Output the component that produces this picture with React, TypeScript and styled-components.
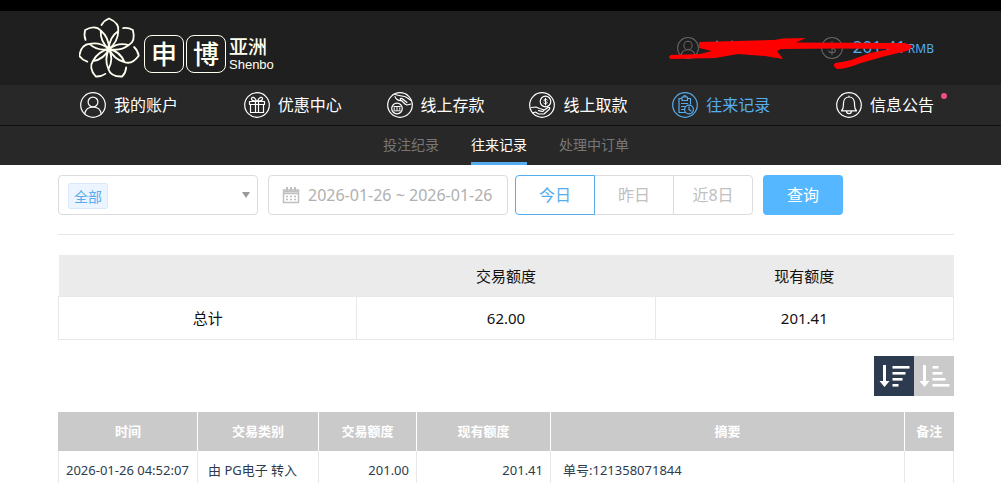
import React from "react";
import styled, { createGlobalStyle } from "styled-components";

const GlobalStyle = createGlobalStyle`
  *, *::before, *::after { box-sizing: border-box; }
  body {
    margin: 0;
    background: #fff;
    color: #111;
    font: 14px/20px "Noto Sans", "Noto Sans CJK SC", sans-serif;
  }
  button, input, select { font: inherit; margin: 0; }
  a { color: inherit; text-decoration: none; }
`;

const blue = "#55acee";

const TopBar = styled.header`
  position: relative;
  display: flex;
  align-items: center;
  justify-content: space-between;
  height: 85px;
  padding: 0 67px 0 79px;
  border-top: 11px solid #000;
  background: #1f1f1f;
`;

const Logo = styled.a`
  display: flex;
  align-items: center;
  color: #fffff0;

  > svg { margin-right: 4px; }
`;

const LogoTile = styled.span`
  display: flex;
  align-items: center;
  justify-content: center;
  width: 40px;
  height: 38px;
  margin: 12px 2px 0 0;
  border: 1px solid #fffff0;
  border-radius: 8px;
  font-size: 26px;
  font-weight: 500;
`;

const LogoName = styled.span`
  display: flex;
  flex-direction: column;
  margin: 12px 0 0 1px;
  font: 13px/16px "Liberation Sans", sans-serif;

  strong {
    font: 500 19px/22px "Noto Sans CJK SC", sans-serif;
  }
`;

const LatinName = styled.span`
  display: block;
`;

const Account = styled.div`
  display: flex;
  align-items: center;
  gap: 10px;
  color: ${blue};
`;

const AccountUser = styled.a`
  display: flex;
  width: 134px;
`;

const Balance = styled.span`
  display: flex;
  align-items: baseline;
  gap: 2px;
  font-size: 17px;

  small { font-size: 12px; }
`;

const Scribble = styled.svg`
  position: absolute;
  top: 19px;
  right: 88px;
  pointer-events: none;
`;

const Nav = styled.nav`
  display: flex;
  justify-content: space-between;
  height: 41px;
  padding: 0 67px 0 80px;
  border-bottom: 1px solid #111;
  background: #282828;
`;

const NavLink = styled.a<{ $active?: boolean }>`
  position: relative;
  display: flex;
  align-items: center;
  gap: 8px;
  color: ${(p) => (p.$active ? blue : "#fff")};
  font-size: 16px;

  &:first-child { margin-right: 21px; }
  &:last-child { margin-left: 21px; }
`;

const Dot = styled.i`
  position: absolute;
  top: 8px;
  right: -13px;
  width: 6px;
  height: 6px;
  border-radius: 50%;
  background: #f0507c;
`;

const SubNav = styled.nav`
  display: flex;
  justify-content: center;
  gap: 32px;
  height: 39px;
  padding: 0 47px 0 58px;
  background: #282828;
`;

const SubLink = styled.a<{ $active?: boolean }>`
  border-bottom: 3px solid ${(p) => (p.$active ? blue : "transparent")};
  color: ${(p) => (p.$active ? "#fff" : "#777")};
  line-height: 38px;
`;

const Main = styled.main`
  padding: 10px 47px 0 58px;
`;

const Filters = styled.form`
  display: flex;
  padding-bottom: 19px;
  border-bottom: 1px solid #e6e6e6;
`;

const TypeField = styled.div`
  position: relative;
  width: 200px;
  height: 40px;
  margin-right: 10px;
  border: 1px solid #dcdcdc;
  border-radius: 4px;

  &::before {
    content: "";
    position: absolute;
    top: 7px;
    left: 9px;
    width: 40px;
    height: 26px;
    border: 1px solid #d9e9fb;
    border-radius: 2px;
    background: #ecf5ff;
  }

  &::after {
    content: "";
    position: absolute;
    top: 16px;
    right: 7px;
    border: 4px solid transparent;
    border-top: 6px solid #999;
    border-bottom: 0;
  }
`;

const TypeSelect = styled.select`
  position: relative;
  z-index: 1;
  width: 100%;
  height: 100%;
  padding: 3px 15px 0;
  border: 0;
  background: transparent;
  color: ${blue};
  appearance: none;
`;

const DateField = styled.label`
  display: flex;
  align-items: center;
  gap: 8px;
  width: 240px;
  height: 40px;
  margin-right: 7px;
  padding: 0 4px 0 13px;
  border: 1px solid #dcdcdc;
  border-radius: 4px;
  color: #c0c0c0;

  svg { flex: none; }
`;

const DateInput = styled.input`
  flex: 1;
  min-width: 0;
  padding: 0;
  border: 0;
  outline: 0;
  background: transparent;
  color: #b0b0b0;
  font-size: 16px;
`;

const DayGroup = styled.div`
  display: flex;
  margin-right: 10px;
`;

const DayButton = styled.button<{ $active?: boolean }>`
  position: relative;
  z-index: ${(p) => (p.$active ? 1 : 0)};
  width: 80px;
  height: 40px;
  padding: 0;
  border: 1px solid ${(p) => (p.$active ? blue : "#dcdcdc")};
  background: #fff;
  color: ${(p) => (p.$active ? blue : "#c0c0c0")};
  font-size: 16px;

  & + & { margin-left: -1px; }
  &:first-child { border-radius: 4px 0 0 4px; }
  &:last-child { border-radius: 0 4px 4px 0; }
`;

const SearchButton = styled.button`
  width: 80px;
  height: 40px;
  padding: 0;
  border: 0;
  border-radius: 4px;
  background: #55b7ff;
  color: #fff;
  font-size: 16px;
`;

const SummaryTable = styled.table`
  width: 100%;
  margin-top: 20px;
  border-collapse: collapse;
  table-layout: fixed;
  font-size: 15px;
  text-align: center;

  th, td { padding: 0; }
  thead th { height: 41px; padding-top: 2px; background: #ebebeb; font-weight: 400; }
  tbody th, td { height: 43px; border: 1px solid #e8e8e8; font-weight: 400; }
`;

const SortBar = styled.div`
  display: flex;
  justify-content: flex-end;
  margin: 16px 0;
`;

const SortButton = styled.button<{ $active?: boolean }>`
  width: 40px;
  height: 40px;
  padding: 0;
  border: 0;
  background: ${(p) => (p.$active ? "#2c3b50" : "#cacaca")};
  color: #fff;

  svg { display: block; }
`;

const RecordTable = styled.table`
  width: 100%;
  border-collapse: collapse;
  table-layout: fixed;
  color: #2c3b50;

  th {
    height: 39px;
    padding: 0;
    border-left: 1px solid #fff;
    background: #cacaca;
    color: #fff;
    font-size: 13px;
  }
  th:first-child { border-left-color: #cacaca; }
  td {
    height: 40px;
    padding: 0 7px;
    border: 1px solid #e8e8e8;
    border-top: 0;
    font-size: 13px;
    white-space: nowrap;
  }
`;

const Cell = styled.td<{ $kind?: "type" | "amount" | "note" }>`
  && {
    text-align: ${(p) => (p.$kind === "amount" ? "right" : "left")};
    padding-left: ${(p) => (p.$kind === "note" ? "12px" : p.$kind === "type" ? "10px" : "7px")};
  }
`;

const Flower = () => (
  <svg width="61" height="64" viewBox="-30 -33 61 64" fill="none" stroke="#fffff0" strokeWidth="1.8" strokeLinecap="round" strokeLinejoin="round">
    {[0, 1, 2, 3, 4, 5, 6].map((i) => (
      <path
        key={i}
        transform={`rotate(${(i * 360) / 7})`}
        d="M-7.5 -24 Q-5 -28.5 0 -30.5 Q10.5 -26 9.3 -18 Q9 -7 0 0 M9.3 -18 Q0 -11.5 0 0"
      />
    ))}
  </svg>
);

const Round = ({ children, size = 26, color = "currentColor" }: { children: React.ReactNode; size?: number; color?: string }) => (
  <svg width={size} height={size} viewBox="0 0 26 26" fill="none" stroke={color} strokeWidth="1.2" strokeLinecap="round" strokeLinejoin="round">
    <circle cx="13" cy="13" r="12.3" />
    {children}
  </svg>
);

const UserShape = () => (
  <>
    <circle cx="13" cy="10" r="4.9" />
    <path d="M4.8 21.8 C5.5 17.5 8.5 15 13 15 S20.5 17.5 21.2 21.8" />
  </>
);

const DollarShape = () => (
  <path d="M13 5 V21 M17 9.5 C16 7 9.5 6.8 9.5 10 C9.5 13.5 17 12.3 17 16 C17 19.5 9.8 19.3 9 16.4" />
);

const GiftShape = () => (
  <path d="M5.5 9.5 H20.5 V12.5 H5.5 Z M6.5 12.5 V20.5 H19.5 V12.5 M11.5 9.5 V20.5 M14.5 9.5 V20.5 M12.5 9 C11 5 7.5 4 7.5 7 C7.5 8.5 10 9 12.5 9 M13.5 9 C15 5 18.5 4 18.5 7 C18.5 8.5 16 9 13.5 9" />
);

const DepositShape = () => (
  <>
    <circle cx="10" cy="16.5" r="5.3" />
    <path d="M6.8 14.5 H13.2 M6.8 18.8 H13.2 M7.2 17.5 V15.8 M10 17.5 V15.5 M12.8 17.5 V15.8" strokeWidth="1" />
    <path d="M8 2.5 C11 3.5 14 4 17.5 4.5 C20 5 21.5 7 24 8.5 M8 4.5 C8.5 7 11.5 9 14.5 8.5 L18 12 M14.5 8.5 C12.5 7.5 13 6 15 6.5 L20 10.5 M18 12 L20 13 L24 12" />
  </>
);

const WithdrawShape = () => (
  <>
    <circle cx="16.5" cy="9.5" r="5.3" />
    <path d="M18.3 8 C17.5 6.8 14.9 7 15 8.3 C15.1 9.8 18.2 9.2 18.2 10.8 C18.2 12.2 15.3 12.2 14.6 11 M16.5 6.2 V13" strokeWidth="1" />
    <path d="M2.5 15.5 L7 15 L10.5 16.5 L14 17.5 C15.5 18.2 14.5 19.5 13 19.3 L9.5 18.7 M14.5 18.5 L19 15.5 C20.8 14.8 21.3 16.2 20 17.5 L15 22 H9.5 L6.5 20 L3.5 21" />
  </>
);

const RecordShape = () => (
  <>
    <path d="M10 6.5 H7 V20.5 H13 M15.5 6.5 H18.5 V12 M10 5 H15.5 V8.5 H10 Z M11.5 5 C11.5 3 14 3 14 5 M9.5 11.5 H15.5 M9.5 14.5 H12.5 M9.5 17.5 H12" />
    <circle cx="17" cy="17.5" r="4.4" />
    <path d="M17 14.8 V17.5 L19 19" />
  </>
);

const BellShape = () => (
  <path d="M13 4 V5 M5.5 18.8 C8 16.5 7.3 14 7.5 11 C7.8 7 10 5 13 5 S18.2 7 18.5 11 C18.7 14 18 16.5 20.5 18.8 Z M10.5 19 C10.5 22.5 15.5 22.5 15.5 19" />
);

const Calendar = () => (
  <svg width="18" height="18" viewBox="0 0 18 18" fill="none" stroke="currentColor" aria-hidden="true">
    <path d="M1.5 4 H16.5 V16.5 H1.5 Z M1.5 7.5 H16.5" strokeWidth="1.5" />
    <path d="M2 5.5 H16" strokeWidth="2" />
    <path d="M5 1 V5 M9 1 V5 M13 1 V5" strokeWidth="2" />
    <path d="M4 10.5 H14 M4 13.5 H14" strokeWidth="1.5" strokeDasharray="2 2" />
  </svg>
);

const SortIcon = ({ widths }: { widths: number[] }) => (
  <svg width="40" height="40" viewBox="0 0 40 40" fill="currentColor" aria-hidden="true">
    <path d="M9 9 H12 V25 H15.5 L10.5 31 L5.5 25 H9 Z" />
    {widths.map((w, i) => (
      <rect key={i} x="18.5" y={10 + i * 6} width={w} height="2.6" />
    ))}
  </svg>
);

const navItems = [
  { label: "我的账户", icon: <UserShape /> },
  { label: "优惠中心", icon: <GiftShape /> },
  { label: "线上存款", icon: <DepositShape /> },
  { label: "线上取款", icon: <WithdrawShape /> },
  { label: "往来记录", icon: <RecordShape />, active: true },
  { label: "信息公告", icon: <BellShape />, dot: true },
];

export default function App() {
  return (
    <>
      <GlobalStyle />
      <TopBar>
        <Logo href="#">
          <Flower />
          <LogoTile>申</LogoTile>
          <LogoTile>博</LogoTile>
          <LogoName>
            <strong>亚洲</strong>
            <LatinName>Shenbo</LatinName>
          </LogoName>
        </Logo>
        <Account>
          <AccountUser href="#" aria-label="我的账户">
            <Round size={22} color="#666"><UserShape /></Round>
          </AccountUser>
          <Round size={22} color="#666"><DollarShape /></Round>
          <Balance>201.41 <small>RMB</small></Balance>
        </Account>
        <Scribble width="245" height="44" viewBox="668 30 245 44" aria-hidden="true">
          <path d="M716 41.5 h2 M731 41.5 h2 M773 52 l-1.5 2" stroke={blue} strokeWidth="1.5" />
          <path
            fill="#f00"
            d="M699 42 L736 41 L774 40 L783 38.5 L806 38 L796 42.5 L904 43 Q911 44 912 47 Q908 52 898 53 L882 57 L861 63 Q846 69 837 69 Q832 66 835 63 Q844 62 851 60 L870 53 L890 49 L840 48.5 L781 49 L777 51 L783 59 L765 56 L738 54 L715 58 L671 59 Q667 57 671 55 L700 54 L712 51 L699 48 Z"
          />
        </Scribble>
      </TopBar>
      <Nav>
        {navItems.map((n) => (
          <NavLink key={n.label} href="#" $active={n.active}>
            <Round>{n.icon}</Round>
            {n.label}
            {n.dot && <Dot />}
          </NavLink>
        ))}
      </Nav>
      <SubNav>
        <SubLink href="#">投注纪录</SubLink>
        <SubLink href="#" $active>往来记录</SubLink>
        <SubLink href="#">处理中订单</SubLink>
      </SubNav>
      <Main>
        <Filters onSubmit={(e) => e.preventDefault()}>
          <TypeField>
            <TypeSelect aria-label="交易类别">
              <option>全部</option>
            </TypeSelect>
          </TypeField>
          <DateField>
            <Calendar />
            <DateInput aria-label="时间" readOnly defaultValue="2026-01-26 ~ 2026-01-26" />
          </DateField>
          <DayGroup>
            <DayButton type="button" $active>今日</DayButton>
            <DayButton type="button">昨日</DayButton>
            <DayButton type="button">近8日</DayButton>
          </DayGroup>
          <SearchButton type="submit">查询</SearchButton>
        </Filters>
        <SummaryTable>
          <thead>
            <tr>
              <th />
              <th>交易额度</th>
              <th>现有额度</th>
            </tr>
          </thead>
          <tbody>
            <tr>
              <th>总计</th>
              <td>62.00</td>
              <td>201.41</td>
            </tr>
          </tbody>
        </SummaryTable>
        <SortBar>
          <SortButton type="button" $active aria-label="降序">
            <SortIcon widths={[17, 13, 10, 6]} />
          </SortButton>
          <SortButton type="button" aria-label="升序">
            <SortIcon widths={[6, 10, 13, 17]} />
          </SortButton>
        </SortBar>
        <RecordTable>
          <colgroup>
            <col width="139" />
            <col width="121" />
            <col width="98" />
            <col width="134" />
            <col />
            <col width="49" />
          </colgroup>
          <thead>
            <tr>
              <th>时间</th>
              <th>交易类别</th>
              <th>交易额度</th>
              <th>现有额度</th>
              <th>摘要</th>
              <th>备注</th>
            </tr>
          </thead>
          <tbody>
            <tr>
              <Cell>2026-01-26 04:52:07</Cell>
              <Cell $kind="type">由 PG电子 转入</Cell>
              <Cell $kind="amount">201.00</Cell>
              <Cell $kind="amount">201.41</Cell>
              <Cell $kind="note">单号:121358071844</Cell>
              <Cell />
            </tr>
          </tbody>
        </RecordTable>
      </Main>
    </>
  );
}
